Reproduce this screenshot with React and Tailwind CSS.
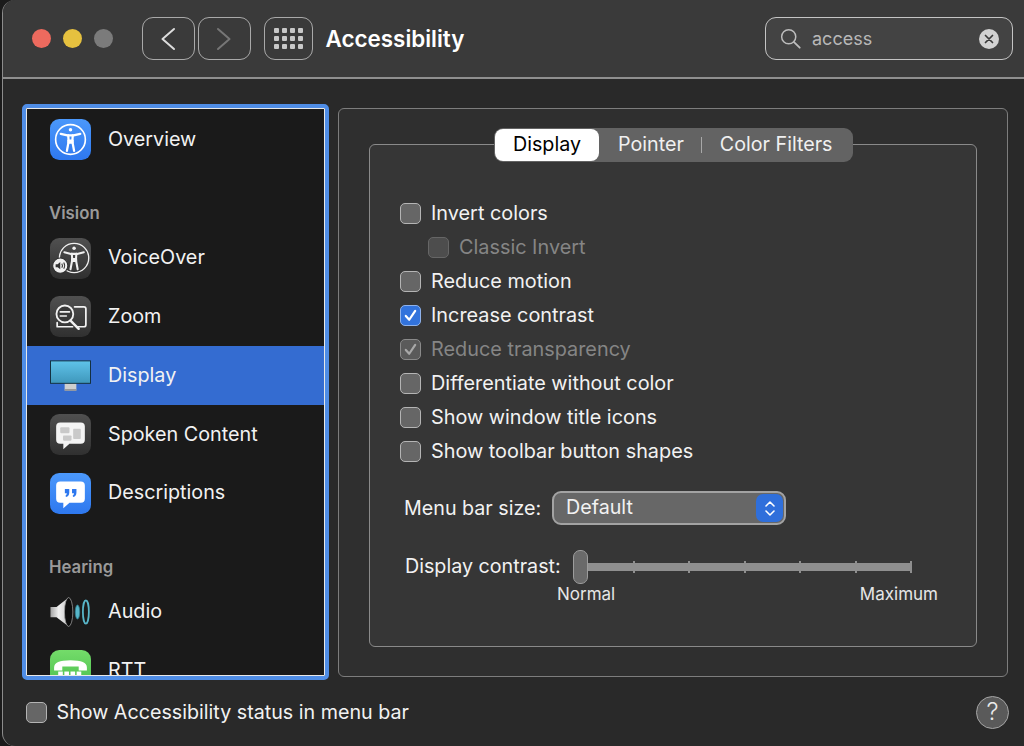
import React from "react";

const Body = ({ s = "#fff", w = 2.2 }) => (
  <g fill="none" stroke={s} strokeWidth={w} strokeLinecap="round" strokeLinejoin="round">
    <circle cx="20" cy="10.5" r="1.7" fill={s} stroke="none" />
    <path d="M10.5 14.5 L17 16 H23 L29.5 14.5" />
    <path d="M17.8 16 L18.2 22 L16.5 31" />
    <path d="M22.2 16 L21.8 22 L23.5 31" />
    <path d="M18 21 H22 V23 H18Z" fill={s} />
  </g>
);

const IconOverview = () => (
  <svg viewBox="0 0 40 40" className="w-full h-full">
    <defs><linearGradient id="ov" x1="0" y1="0" x2="0" y2="1"><stop offset="0" stopColor="#4b98fb" /><stop offset="1" stopColor="#2e78ef" /></linearGradient></defs>
    <rect width="40" height="40" rx="9" fill="url(#ov)" />
    <circle cx="20" cy="20" r="14.5" fill="none" stroke="#fff" strokeWidth="1.6" />
    <Body />
  </svg>
);

const IconVoiceOver = () => (
  <svg viewBox="0 0 40 40" className="w-full h-full">
    <defs><linearGradient id="gy" x1="0" y1="0" x2="0" y2="1"><stop offset="0" stopColor="#505050" /><stop offset="1" stopColor="#303030" /></linearGradient></defs>
    <rect width="40" height="40" rx="9" fill="url(#gy)" />
    <g transform="translate(3.5 -0.5)">
      <circle cx="20" cy="20" r="14.3" fill="none" stroke="#f0f0f0" strokeWidth="1.3" />
      <Body s="#f0f0f0" w="2" />
    </g>
    <circle cx="10" cy="27" r="7.4" fill="#f0f0f0" stroke="#2f2f2f" strokeWidth="1" />
    <path d="M5.5 25.5 H7.5 L10 23.5 V30.5 L7.5 28.5 H5.5Z" fill="#333" />
    <path d="M11.5 25 Q12.8 27 11.5 29 M13.4 24 Q15.2 27 13.4 30" fill="none" stroke="#333" strokeWidth="1" />
  </svg>
);

const IconZoom = () => (
  <svg viewBox="0 0 40 40" className="w-full h-full">
    <rect width="40" height="40" rx="9" fill="url(#gy)" />
    <g fill="none" stroke="#f2f2f2" strokeLinecap="round" strokeLinejoin="round">
      <path d="M24 10.5 H33 Q35 10.5 35 12.5 V28 Q35 30 33 30 H27" strokeWidth="1.7" />
      <path d="M7 26 V30 H22" strokeWidth="1.7" />
      <circle cx="14.5" cy="17.5" r="8.2" strokeWidth="1.8" fill="#3a3a3a" />
      <path d="M20 24 L28 32" strokeWidth="2.4" />
      <path d="M10 15.5 H19 M10 19.5 H16" strokeWidth="1.5" />
    </g>
  </svg>
);

const IconDisplay = () => (
  <svg viewBox="0 0 42 32" className="w-full h-full">
    <defs><linearGradient id="sc" x1="0" y1="0" x2="0" y2="1"><stop offset="0" stopColor="#5fc3ea" /><stop offset="1" stopColor="#3f97bb" /></linearGradient></defs>
    <rect x="15" y="22" width="12" height="9" fill="#cfcfcf" />
    <rect x="15" y="29.5" width="12" height="1.5" fill="#8d8d8d" />
    <rect x="0.5" y="0.5" width="41" height="23" fill="url(#sc)" stroke="#14303f" />
  </svg>
);

const Bubble = ({ fill }) => (
  <path d="M10 8.3 H30 Q34 8.3 34 12.3 V25 Q34 29 30 29 H19 L13 34.5 V29 H10 Q6 29 6 25 V12.3 Q6 8.3 10 8.3Z" fill={fill} />
);

const IconSpoken = () => (
  <svg viewBox="0 0 40 40" className="w-full h-full">
    <rect width="40" height="40" rx="9" fill="url(#gy)" />
    <Bubble fill="#f4f4f4" />
    <rect x="10" y="13" width="9" height="5.7" rx="0.8" fill="#c9c9c9" />
    <rect x="12.7" y="21" width="8.3" height="5" rx="0.8" fill="#c9c9c9" />
    <rect x="22.6" y="14.5" width="7.4" height="10" rx="0.8" fill="#c9c9c9" />
  </svg>
);

const IconDescriptions = () => (
  <svg viewBox="0 0 40 40" className="w-full h-full">
    <rect width="40" height="40" rx="9" fill="url(#ov)" />
    <Bubble fill="#fff" />
    <path d="M14.5 15.5 H18.8 V19 Q18.8 22.5 15.6 23.5 L15.1 22.2 Q16.3 21.6 16.4 19.8 H14.5Z M21.5 15.5 H25.8 V19 Q25.8 22.5 22.6 23.5 L22.1 22.2 Q23.3 21.6 23.4 19.8 H21.5Z" fill="#2e78ef" />
  </svg>
);

const IconAudio = () => (
  <svg viewBox="0 0 44 32" className="w-full h-full">
    <defs><linearGradient id="sp" x1="0" y1="0" x2="1" y2="0"><stop offset="0" stopColor="#a4a4a4" /><stop offset="0.45" stopColor="#f0f0f0" /><stop offset="1" stopColor="#c4c4c4" /></linearGradient></defs>
    <path d="M0.5 10.5 H7 L20 0.5 V31.5 L7 21.5 H0.5Z" fill="url(#sp)" />
    <ellipse cx="20" cy="16" rx="4.5" ry="15.5" fill="#0d0d0d" stroke="#a0a0a0" strokeWidth="0.8" />
    <ellipse cx="29.5" cy="16" rx="2.4" ry="7.5" fill="#58b6c9" stroke="#2d7d90" strokeWidth="0.8" />
    <ellipse cx="38.5" cy="16" rx="3.2" ry="12.5" fill="#1a1a1a" stroke="#58b6c9" strokeWidth="1.9" />
  </svg>
);

const IconRTT = () => (
  <svg viewBox="0 0 40 40" className="w-full h-full">
    <defs><linearGradient id="gr" x1="0" y1="0" x2="0" y2="1"><stop offset="0" stopColor="#74dc6a" /><stop offset="1" stopColor="#45bb4a" /></linearGradient></defs>
    <rect width="40" height="40" rx="9" fill="url(#gr)" />
    <path d="M4 17 Q4 10 20 10 Q36 10 36 17 V20 H28 V16 H12 V20 H4Z" fill="#fff" />
    <g fill="#fff"><rect x="8" y="21" width="4.5" height="4" /><rect x="14" y="21" width="4.5" height="4" /><rect x="20" y="21" width="4.5" height="4" /><rect x="26" y="21" width="4.5" height="4" /></g>
  </svg>
);

const Row = ({ icon, label, selected }) => (
  <div className={`flex items-center h-[58.75px] pl-[23px] gap-[17px] ${selected ? "bg-[#346cd1]" : ""}`}>
    <div className="w-[41px] h-[41px] shrink-0 flex items-center justify-center">{icon}</div>
    <span className="text-[19.75px] text-[#f2f2f2]">{label}</span>
  </div>
);

const Group = ({ children }) => (
  <div className="text-[16.8px] font-semibold text-[#9a9a9a] pl-[22px] h-[60px] pt-[34px] leading-[20px]">{children}</div>
);

const Check = ({ state = "off" }) => {
  const cls = {
    off: "bg-[#666] border-[#b4b4b4]",
    dim: "bg-[#4d4d4d] border-[#666]",
    on: "bg-[#3273dc] border-[#8fb2ea]",
    ondim: "bg-[#5a5a5a] border-[#8a8a8a]",
  }[state];
  return (
    <span className={`w-[21px] h-[21px] rounded-[5px] border-[1.5px] shrink-0 flex items-center justify-center ${cls}`}>
      {(state === "on" || state === "ondim") && (
        <svg viewBox="0 0 20 20" className="w-[17px] h-[17px]">
          <path d="M4.5 10.5 L8.5 15 L15.5 4.5" fill="none" stroke={state === "on" ? "#fff" : "#a8a8a8"} strokeWidth="2.6" strokeLinecap="round" strokeLinejoin="round" />
        </svg>
      )}
    </span>
  );
};

const Option = ({ label, state, dim, indent }) => (
  <div className={`flex items-center h-[34px] gap-[10px] ${indent ? "pl-[28px]" : ""}`}>
    <Check state={state} />
    <span className={`text-[19.85px] pt-[2px] ${dim ? "text-[#858585]" : "text-[#f2f2f2]"}`}>{label}</span>
  </div>
);

const NavBtn = ({ children, w }) => (
  <div className={`${w} h-[43px] rounded-[11px] border-[1.5px] border-[#a9a9a9] flex items-center justify-center`}>{children}</div>
);

export default function App() {
  return (
    <div className="w-[1024px] h-[746px] overflow-hidden bg-[#1b1b1b] pl-[2px] text-[#f2f2f2]" style={{ fontFamily: "Inter, 'Noto Sans', sans-serif" }}>
      <div className="h-full rounded-l-[13px] border-l-[1.5px] border-[#8c8c8c] bg-[#292929] flex flex-col overflow-hidden">
        {/* Toolbar */}
        <div className="h-[77px] shrink-0 bg-[#3a3a3a] border-b-[2px] border-[#8f8f8f] flex items-center pl-[28.5px] pr-[11px] box-content">
          <div className="flex gap-[12px]">
            <span className="w-[19px] h-[19px] rounded-full bg-[#ed6a5e]" />
            <span className="w-[19px] h-[19px] rounded-full bg-[#e6c13f]" />
            <span className="w-[19px] h-[19px] rounded-full bg-[#7b7b7b]" />
          </div>
          <div className="flex gap-[3px] ml-[29px]">
            <NavBtn w="w-[53px]">
              <svg viewBox="0 0 16 24" className="w-[16px] h-[24px]"><path d="M14 2 L2.5 12 L14 22" fill="none" stroke="#dcdcdc" strokeWidth="2" strokeLinecap="round" strokeLinejoin="round" /></svg>
            </NavBtn>
            <NavBtn w="w-[53px]">
              <svg viewBox="0 0 16 24" className="w-[16px] h-[24px]"><path d="M2 2 L13.5 12 L2 22" fill="none" stroke="#767676" strokeWidth="2" strokeLinecap="round" strokeLinejoin="round" /></svg>
            </NavBtn>
          </div>
          <div className="ml-[13px]">
            <NavBtn w="w-[49px]">
              <div className="grid grid-cols-4 gap-[3px]">
                {Array.from({ length: 12 }).map((_, i) => (
                  <span key={i} className="w-[5px] h-[5px] rounded-[1px] bg-[#c8c8c8]" />
                ))}
              </div>
            </NavBtn>
          </div>
          <div className="ml-[13px] text-[22.4px] font-semibold text-white">Accessibility</div>
          <div className="ml-auto w-[248px] h-[43px] rounded-[11px] border-[1.5px] border-[#c4c4c4] bg-[#434343] flex items-center pl-[14px] pr-[13px]">
            <svg viewBox="0 0 24 24" className="w-[22px] h-[22px]"><circle cx="9.5" cy="9.5" r="7.7" fill="none" stroke="#bdbdbd" strokeWidth="1.6" /><path d="M15.3 15.3 L21.5 21.5" stroke="#bdbdbd" strokeWidth="2" strokeLinecap="round" /></svg>
            <span className="ml-[10px] text-[18px] text-[#b8b8b8]">access</span>
            <span className="ml-auto w-[20px] h-[20px] rounded-full bg-[#d2d2d2] flex items-center justify-center">
              <svg viewBox="0 0 10 10" className="w-[10px] h-[10px]"><path d="M1.5 1.5 L8.5 8.5 M8.5 1.5 L1.5 8.5" stroke="#3a3a3a" strokeWidth="1.7" strokeLinecap="round" /></svg>
            </span>
          </div>
        </div>

        {/* Main */}
        <div className="flex items-start pl-[19px] pt-[25px] gap-[9px]">
          <div className="w-[307px] h-[576px] shrink-0 rounded-[5px] border-[4px] border-[#4f8de6] overflow-hidden">
            <div className="h-full border border-[#e8e8e8] bg-[#1a1a1a] pt-[1px] overflow-hidden">
              <Row icon={<IconOverview />} label="Overview" />
              <Group>Vision</Group>
              <Row icon={<IconVoiceOver />} label="VoiceOver" />
              <Row icon={<IconZoom />} label="Zoom" />
              <Row icon={<div className="w-[42px] h-[32px]"><IconDisplay /></div>} label="Display" selected />
              <Row icon={<IconSpoken />} label="Spoken Content" />
              <Row icon={<IconDescriptions />} label="Descriptions" />
              <Group>Hearing</Group>
              <Row icon={<div className="w-[44px] h-[32px]"><IconAudio /></div>} label="Audio" />
              <Row icon={<IconRTT />} label="RTT" />
            </div>
          </div>

          <div className="w-[670px] h-[568.5px] mt-[4px] shrink-0 rounded-[6px] border-[1.5px] border-[#7d7d7d] bg-[#2f2f2f] pl-[30px] pt-[35px]">
            <div className="relative w-[608px] h-[503px] rounded-[6px] border-[1.5px] border-[#8a8a8a] bg-[#363636] pl-[30px] pt-[51px]">
              <div className="absolute left-[124px] -top-[17px] w-[359px] h-[34px] rounded-[9px] bg-[#636363] flex items-center text-[19.7px]">
                <span className="w-[104px] h-[32px] ml-[1px] rounded-[8px] bg-white text-black flex items-center justify-center">Display</span>
                <span className="ml-[19px] text-[#f0f0f0]">Pointer</span>
                <span className="ml-[17px] w-[1px] h-[16px] bg-[#a8a8a8]" />
                <span className="ml-[18px] text-[#f0f0f0]">Color Filters</span>
              </div>

              <Option label="Invert colors" state="off" />
              <Option label="Classic Invert" state="dim" dim indent />
              <Option label="Reduce motion" state="off" />
              <Option label="Increase contrast" state="on" />
              <Option label="Reduce transparency" state="ondim" dim />
              <Option label="Differentiate without color" state="off" />
              <Option label="Show window title icons" state="off" />
              <Option label="Show toolbar button shapes" state="off" />

              <div className="flex items-center mt-[23px] pl-[4px]">
                <span className="text-[19.7px] w-[148px] pt-[2px]">Menu bar size:</span>
                <div className="w-[234px] h-[34px] rounded-[9px] border-[2px] border-[#a3a3a3] bg-[#676767] flex items-center pl-[12px] pr-[1px]">
                  <span className="text-[19.7px]">Default</span>
                  <span className="ml-auto w-[27px] h-[28px] rounded-[7px] bg-[#2f6fdb] flex items-center justify-center">
                    <svg viewBox="0 0 14 20" className="w-[14px] h-[21px]"><path d="M3 7.5 L7 3.5 L11 7.5 M3 12.5 L7 16.5 L11 12.5" fill="none" stroke="#fff" strokeWidth="1.6" strokeLinecap="round" strokeLinejoin="round" /></svg>
                  </span>
                </div>
              </div>

              <div className="flex items-center mt-[24.5px] pl-[5px]">
                <span className="text-[19.7px] w-[168px]">Display contrast:</span>
                <div className="relative w-[339px] h-[34px] flex items-center">
                  <span className="absolute left-0 top-0 z-10 w-[15px] h-[34px] rounded-[7px] bg-[#6a6a6a] border-[1.5px] border-[#9c9c9c]" />
                  <div className="w-full h-[8px] bg-[#8f8f8f] flex justify-between pl-[60px]">
                    {Array.from({ length: 6 }).map((_, i) => (
                      <span key={i} className="w-[2px] h-[12px] -mt-[2px] bg-[#8f8f8f]" />
                    ))}
                  </div>
                </div>
              </div>
              <div className="flex justify-between w-[381px] ml-[157px] -mt-[2px] text-[17px] text-[#e6e6e6]">
                <span>Normal</span>
                <span>Maximum</span>
              </div>
            </div>
          </div>
        </div>

        {/* Footer */}
        <div className="flex items-center h-[34px] mt-[15px] pl-[22.5px] pr-[15px]">
          <Check state="off" />
          <span className="ml-[10px] pt-[1px] text-[19.7px]">Show Accessibility status in menu bar</span>
          <span className="ml-auto w-[33px] h-[33px] rounded-full bg-[#5a5a5a] border-[1.5px] border-[#a5a5a5] flex items-center justify-center text-[24px] font-light text-[#eaeaea]">?</span>
        </div>
      </div>
    </div>
  );
}
